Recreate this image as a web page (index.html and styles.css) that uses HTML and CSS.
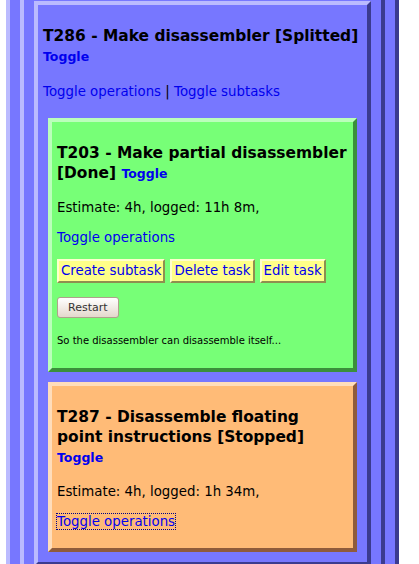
FILE: index.html
```html
<!DOCTYPE html>
<html>
<head>
<meta charset="utf-8">
<title>Tasks</title>
<link rel="stylesheet" href="styles.css">
</head>
<body>
<div class="frame frame-outer">
  <div class="frame frame-inner">
    <div class="task task-blue">
      <h3 class="task-title">T286 - Make disassembler [Splitted] <a class="toggle" href="#">Toggle</a></h3>
      <p class="task-p"><a class="link" href="#">Toggle operations</a> | <a class="link" href="#">Toggle subtasks</a></p>
      <div class="subtasks">
        <div class="task task-green">
          <h3 class="task-title">T203 - Make partial disassembler [Done] <a class="toggle" href="#">Toggle</a></h3>
          <p class="task-p">Estimate: 4h, logged: 11h 8m,</p>
          <p class="task-p"><a class="link" href="#">Toggle operations</a></p>
          <p class="task-p buttons"><a class="btn" href="#">Create subtask</a><a class="btn" href="#">Delete task</a><a class="btn" href="#">Edit task</a></p>
          <p class="task-p restart-row"><button class="restart" type="button">Restart</button></p>
          <p class="task-p"><span class="desc">So the disassembler can disassemble itself...</span></p>
        </div>
        <div class="task task-orange">
          <h3 class="task-title">T287 - Disassemble floating point instructions [Stopped] <a class="toggle" href="#">Toggle</a></h3>
          <p class="task-p">Estimate: 4h, logged: 1h 34m,</p>
          <p class="task-p"><a class="link focused" href="#">Toggle operations</a></p>
        </div>
      </div>
    </div>
  </div>
</div>
</body>
</html>
```

FILE: styles.css
```css
html, body {
  margin: 0;
  padding: 0;
}
body {
  background: #ffffff;
  width: 403px;
  height: 564px;
  overflow: hidden;
  padding-left: 1px;
  font-family: "DejaVu Sans", Verdana, sans-serif;
  font-size: 13.33px;
  line-height: 16px;
  color: #000;
}
.frame {
  background: #7777ff;
  border-style: solid;
  border-width: 4px;
  border-color: #bbbbff #3b3b8f #3b3b8f #bbbbff;
  padding: 5px;
  margin: 5px;
}
.frame-outer {
  margin-top: -27px;
}
.task {
  border-style: solid;
  border-width: 4px;
  padding: 5px;
  margin: 5px;
}
.task-blue {
  background: #7777ff;
  border-color: #bbbbff #3b3b8f #3b3b8f #bbbbff;
}
.task-green {
  background: #77ff77;
  border-color: #bbffbb #3b8f3b #3b8f3b #bbffbb;
}
.task-orange {
  background: #ffbb77;
  border-color: #ffddbb #8f5b3b #8f5b3b #ffddbb;
}
.subtasks {
  display: flex;
  flex-direction: column;
}
.task-title {
  font-size: 15.44px;
  font-weight: bold;
  line-height: 20px;
  margin: 16px 0 16.5px;
}
.toggle {
  font-size: 12.5px;
  font-weight: bold;
  color: #0000ee;
  text-decoration: none;
}
.task-p {
  margin: 13.33px 0;
}
.link {
  color: #0000ee;
  text-decoration: none;
}
.focused {
  outline: 1px dotted #000088;
}
.btn {
  display: inline-block;
  background: #ffff88;
  color: #0000ee;
  text-decoration: none;
  border-style: solid;
  border-width: 2px;
  border-color: #ffffcc #8f8f4f #8f8f4f #ffffcc;
  padding: 2px 2px;
  margin-right: 5px;
}
.restart-row {
  margin: 14.5px 0 14px;
}
.restart {
  font-family: "DejaVu Sans", Verdana, sans-serif;
  font-size: 11px;
  color: #333;
  padding: 3px 10px;
  border: 1px solid #b0a08c;
  border-radius: 3px;
  background: linear-gradient(#ffffff, #e4d8cc);
}
.desc {
  font-size: 10px;
}
```
